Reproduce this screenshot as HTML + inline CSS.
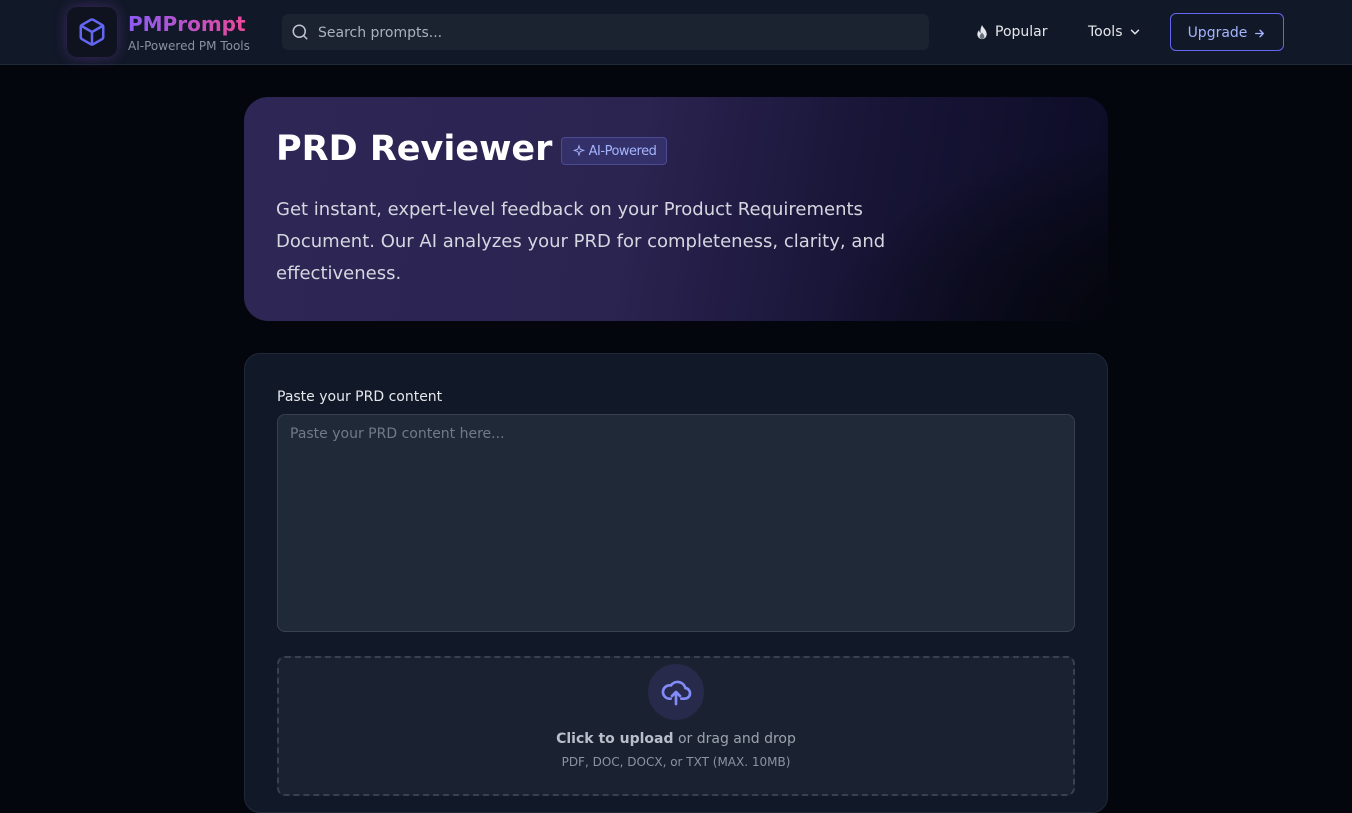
<!DOCTYPE html>
<html><head><meta charset="utf-8"><style>
*{box-sizing:border-box;margin:0;padding:0}
body{width:1352px;height:760px;overflow:hidden;background:#04060d;font-family:"DejaVu Sans","Liberation Sans",sans-serif;color:#e5e7eb;position:relative}
.nav{height:65px;background:#111827;border-bottom:1px solid #1f2937;position:relative}
.logo{position:absolute;left:67px;top:7px;width:50px;height:50px;border-radius:10px;background:#0f1320;box-shadow:0 0 14px rgba(168,85,247,.3);display:flex;align-items:center;justify-content:center}
.brand{position:absolute;left:128px;top:12px;font-weight:bold;font-size:20px;background:linear-gradient(90deg,#8b5cf6,#ec4899);-webkit-background-clip:text;color:transparent}
.sub{position:absolute;left:128px;top:39px;font-size:12px;color:#8b93a3}
.search{position:absolute;left:282px;top:14px;width:647px;height:36px;border-radius:6px;background:#1b2230;display:flex;align-items:center;padding-left:36px;font-size:14px;color:#aab2c0;padding-top:2px}
.search svg{position:absolute;left:9px;top:9px}
.pop{position:absolute;left:975px;top:24px;font-size:14px;color:#e5e7eb;display:flex;align-items:center;gap:6px}
.tools{position:absolute;left:1088px;top:24px;font-size:14px;color:#e5e7eb;display:flex;align-items:center;gap:5px}
.up{position:absolute;left:1170px;top:13px;width:114px;height:38px;border:1px solid #6366f1;border-radius:6px;color:#a5b4fc;font-size:14px;display:flex;align-items:center;justify-content:center;padding-top:2px}
.hero{position:absolute;left:244px;top:97px;width:864px;height:224px;border-radius:24px;background:radial-gradient(ellipse 420px 200px at 1000px 230px,#04060d 30%,transparent 100%),linear-gradient(100deg,#2e2655 0%,#2b2350 45%,#181537 70%,#0c0c25 100%)}
.hero h1{position:absolute;left:32px;top:32px;font-size:35px;font-weight:bold;color:#fff}
.badge{position:absolute;left:317px;top:40px;width:106px;height:28px;border:1px solid #4b4a93;background:#34306a;border-radius:4px;color:#a5b4fc;font-size:13px;display:flex;align-items:center;justify-content:center;gap:3px;letter-spacing:-.5px}
.hero p{position:absolute;left:32px;top:97px;width:640px;font-size:18px;line-height:32px;color:#d5d7e0}
.card{position:absolute;left:244px;top:353px;width:864px;height:460px;border-radius:16px;background:#111827;border:1px solid #1f2937}
.lbl{position:absolute;left:32px;top:35px;font-size:14px;color:#e5e7eb}
.ta{position:absolute;left:32px;top:60px;width:798px;height:218px;border:1px solid #374151;border-radius:8px;background:#1f2937;padding:11px 12px;font-size:14px;color:#717a88}
.drop{position:absolute;left:32px;top:302px;width:798px;height:140px;border:2px dashed #374151;border-radius:8px;background:#1a2130}
.ic{position:absolute;left:369px;top:6px;width:56px;height:56px;border-radius:50%;background:#272a4a;display:flex;align-items:center;justify-content:center}
.dt{position:absolute;left:0;right:0;top:73px;text-align:center;font-size:14px;color:#9ca3af}
.dt b{color:#b9bfca}
.dt2{position:absolute;left:0;right:0;top:97px;text-align:center;font-size:12px;color:#8b93a3}
</style></head><body>
<div class="nav">
 <div class="logo"><svg width="30" height="30" viewBox="0 0 24 24" fill="none" stroke="#6366f1" stroke-width="2" stroke-linejoin="round" stroke-linecap="round"><path d="M21 16V8a2 2 0 0 0-1-1.73l-7-4a2 2 0 0 0-2 0l-7 4A2 2 0 0 0 3 8v8a2 2 0 0 0 1 1.73l7 4a2 2 0 0 0 2 0l7-4A2 2 0 0 0 21 16z"/><path d="M3.3 7L12 12l8.7-5M12 22V12"/></svg></div>
 <div class="brand">PMPrompt</div>
 <div class="sub">AI-Powered PM Tools</div>
 <div class="search"><svg width="18" height="18" viewBox="0 0 24 24" fill="none" stroke="#c0c6d0" stroke-width="2" stroke-linecap="round"><circle cx="11" cy="11" r="8"/><path d="M21 21l-4.3-4.3"/></svg>Search prompts...</div>
 <div class="pop"><svg width="14" height="15" viewBox="0 0 14 16"><path d="M7 0C8 3 12 5 12 10a5 5 0 0 1-10 0c0-2 1-3.5 2-4.5 0 1.5.5 2.5 1.5 3C5 6 5.5 3 7 0z" fill="#e5e7eb"/><path d="M7 8c1 1.5 2.5 2.5 2.5 4.5a2.5 2.5 0 0 1-5 0C4.5 10.5 6 9.5 7 8z" fill="#6b7280"/></svg>Popular</div>
 <div class="tools">Tools <svg width="14" height="14" viewBox="0 0 24 24" fill="none" stroke="#e5e7eb" stroke-width="2.5" stroke-linecap="round" stroke-linejoin="round"><path d="M6 9l6 6 6-6"/></svg></div>
 <div class="up">Upgrade <svg style="margin-left:6px" width="13" height="13" viewBox="0 0 24 24" fill="none" stroke="#a5b4fc" stroke-width="2.5" stroke-linecap="round" stroke-linejoin="round"><path d="M5 12h14M13 6l6 6-6 6"/></svg></div>
</div>
<div class="hero">
 <h1>PRD Reviewer</h1>
 <div class="badge"><svg width="14" height="14" viewBox="0 0 24 24" fill="none" stroke="#a5b4fc" stroke-width="1.6"><path d="M12 3l2 6 6 2-6 2-2 6-2-6-6-2 6-2z"/></svg>AI-Powered</div>
 <p>Get instant, expert-level feedback on your Product Requirements Document. Our AI analyzes your PRD for completeness, clarity, and effectiveness.</p>
</div>
<div class="card">
 <div class="lbl">Paste your PRD content</div>
 <div class="ta">Paste your PRD content here...</div>
 <div class="drop">
  <div class="ic"><svg width="32" height="32" viewBox="0 0 24 24" fill="none" stroke="#818cf8" stroke-width="2" stroke-linecap="round" stroke-linejoin="round"><path d="M8 17H7a5 5 0 1 1 1.2-9.9A6 6 0 0 1 19 9a4 4 0 0 1-1 8h-2"/><path d="M12 21v-9M9 15l3-3 3 3"/></svg></div>
  <div class="dt"><b>Click to upload</b> or drag and drop</div>
  <div class="dt2">PDF, DOC, DOCX, or TXT (MAX. 10MB)</div>
 </div>
</div>
</body></html>
